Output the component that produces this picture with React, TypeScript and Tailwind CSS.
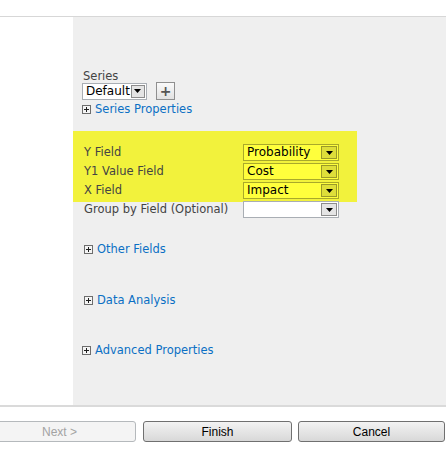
import React from "react";

function Expander() {
  return (
    <svg width="9" height="9" viewBox="0 0 9 9" className="shrink-0">
      <rect x="0.5" y="0.5" width="8" height="8" fill="#f4f4f4" stroke="#6d6d6d" />
      <path d="M2 4.5h5M4.5 2v5" stroke="#1e1e1e" strokeWidth="1" />
    </svg>
  );
}

function Arrow({ hl }: { hl?: boolean }) {
  return (
    <div
      className={
        "w-[16px] self-stretch m-[1px] flex items-center justify-center border " +
        (hl ? "bg-[#dede3a] border-[#9a9a28]" : "bg-[#e4e4e4] border-[#8c8c8c]")
      }
    >
      <svg width="7" height="4" viewBox="0 0 7 4">
        <path d="M0 0h7L3.5 4z" fill="#000" />
      </svg>
    </div>
  );
}

function Select({ value, hl, w }: { value: string; hl?: boolean; w: string }) {
  return (
    <div
      className={
        "flex h-[17px] border " +
        w +
        (hl ? " bg-[#ffff3c] border-[#a9a92a]" : " bg-white border-[#a9aeb4]")
      }
    >
      <span className="flex-1 pl-[3px] text-[12px] leading-[15px] text-black">{value}</span>
      <Arrow hl={hl} />
    </div>
  );
}

function Link({ label, cls }: { label: string; cls: string }) {
  return (
    <div className={"flex items-center gap-[4px] " + cls}>
      <Expander />
      <span className="text-[11.5px] leading-[14px] text-[#0b6fc4]">{label}</span>
    </div>
  );
}

function Btn({ label, disabled, w }: { label: string; disabled?: boolean; w: string }) {
  return (
    <div
      className={
        "h-[21px] shrink-0 rounded-[3px] border flex items-center justify-center text-[12px] font-['Liberation_Sans',sans-serif] " +
        w +
        (disabled
          ? " border-[#b5b9bc] bg-[#f4f4f4] text-[#a3a3a3]"
          : " border-[#707070] bg-gradient-to-b from-[#f3f3f3] to-[#d8d8d8] text-black")
      }
    >
      {label}
    </div>
  );
}

export default function App() {
  const rows = [
    { label: "Y Field", value: "Probability" },
    { label: "Y1 Value Field", value: "Cost" },
    { label: "X Field", value: "Impact" },
  ];

  return (
    <div className="w-[446px] h-[457px] bg-white overflow-hidden font-['DejaVu_Sans',Verdana,sans-serif]">
      <div className="h-[16px]" />
      <div className="h-[1px] bg-[#d7d7d7]" />
      <div className="flex h-[388px]">
        <div className="w-[73px] bg-white" />
        <div className="flex-1 bg-[#efefef] flex flex-col">
          <div className="pl-[9px] pt-[52px]">
            <div className="text-[11.5px] leading-[14px] text-[#444] pl-[1px]">Series</div>
            <div className="flex items-center gap-[9px] mt-[-1px]">
              <Select value="Default" w="w-[65px]" />
              <div className="w-[19px] h-[18px] border border-[#8f8f8f] bg-gradient-to-b from-[#fafafa] to-[#e2e2e2] flex items-center justify-center text-[14px] leading-none font-bold text-[#555]">
                +
              </div>
            </div>
            <Link label="Series Properties" cls="mt-[2px]" />
          </div>

          <div className="mt-[15px] w-[284px] bg-[#f2f23c] pt-[13px] pb-[3px] flex flex-col gap-[2px]">
            {rows.map((r) => (
              <div key={r.label} className="flex items-center h-[17px] pl-[11px]">
                <span className="w-[159px] text-[11.5px] text-[#444]">{r.label}</span>
                <Select value={r.value} hl w="w-[96px]" />
              </div>
            ))}
          </div>
          <div className="flex items-center h-[17px] pl-[11px] mt-[-1px]">
            <span className="w-[159px] text-[11.5px] text-[#444]">Group by Field (Optional)</span>
            <Select value="" w="w-[96px]" />
          </div>

          <Link label="Other Fields" cls="pl-[11px] mt-[24px]" />
          <Link label="Data Analysis" cls="pl-[11px] mt-[37px]" />
          <Link label="Advanced Properties" cls="pl-[9px] mt-[36px]" />
        </div>
      </div>
      <div className="h-[2px] bg-[#dadada]" />
      <div className="flex pt-[14px]">
        <Btn label="Next >" disabled w="w-[153px] ml-[-17px]" />
        <div className="w-[7px] shrink-0" />
        <Btn label="Finish" w="w-[149px]" />
        <div className="w-[6px] shrink-0" />
        <Btn label="Cancel" w="w-[147px]" />
      </div>
    </div>
  );
}
